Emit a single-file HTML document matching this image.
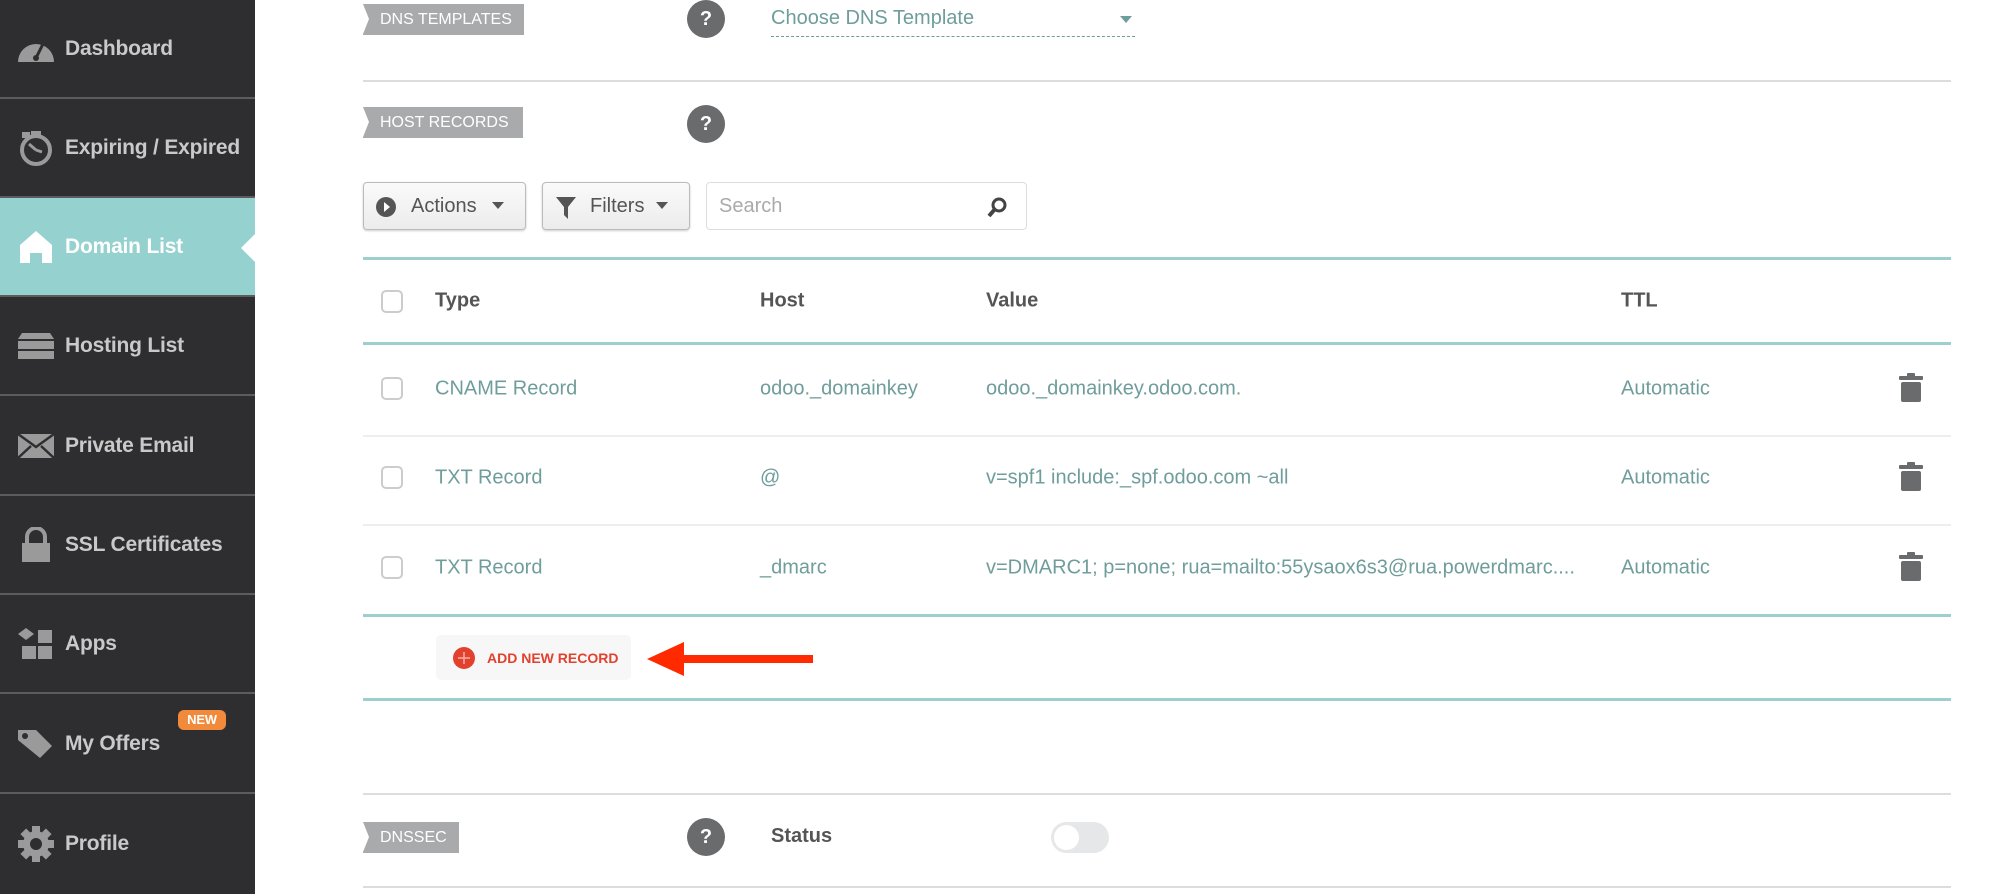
<!DOCTYPE html>
<html><head><meta charset="utf-8"><style>
*{margin:0;padding:0;box-sizing:border-box}
body{width:1999px;height:894px;background:#fff;font-family:"Liberation Sans",sans-serif;position:relative;overflow:hidden}
.sb{position:absolute;left:0;top:0;width:255px;height:894px;background:#2e2e30}
.it{position:absolute;left:0;width:255px;height:99px;border-bottom:2px solid #5c5c5e;color:#c9c9c9;font-weight:bold;font-size:21px;letter-spacing:-0.2px}
.it span{position:absolute;left:65px;top:50%;transform:translateY(-50%)}
.it svg{position:absolute;left:16px;top:50%;transform:translateY(-50%)}
.act{background:#94d1cf;color:#fff}
.a{position:absolute}
.lbl{position:absolute;left:363px;height:31px;background:#a9aaac;color:#fff;font-size:16px;line-height:31px;padding-left:17px}
.lbl:before{content:"";position:absolute;left:0;top:0;border-left:6px solid #fff;border-top:15.5px solid transparent;border-bottom:15.5px solid transparent}
.q{position:absolute;width:38px;height:38px;border-radius:50%;background:#6a6b6d;color:#fff;font-weight:bold;font-size:20px;text-align:center;line-height:38px}
.hl{position:absolute;left:363px;width:1588px}
.btn{position:absolute;top:182px;height:48px;border:1px solid #bbb;border-radius:4px;background:linear-gradient(#fafafa,#ececec);box-shadow:0 1px 2px rgba(0,0,0,.2);color:#555;font-size:20px;line-height:46px}
.cb{position:absolute;left:381px;width:22px;height:23px;border:2px solid #ccc;border-radius:5px}
.t{position:absolute;font-size:20px;color:#6f9d9b;transform:translateY(-50%)}
.th{position:absolute;font-size:20px;color:#555;font-weight:bold;transform:translateY(-50%)}
</style></head><body>
<div class="sb">
<div class="it" style="top:0"><svg width="40" height="30" viewBox="0 0 40 30"><path d="M2 28 A18 18 0 0 1 38 28 Z" fill="#9a9a9a"/><path d="M20 24 L27 10" stroke="#2e2e30" stroke-width="3"/><circle cx="20" cy="24" r="3" fill="#2e2e30"/></svg><span>Dashboard</span></div>
<div class="it" style="top:99px"><svg width="40" height="40" viewBox="0 0 40 40"><circle cx="20" cy="22" r="14" fill="none" stroke="#9a9a9a" stroke-width="4"/><path d="M20 22 L13 16 M20 22 L26 24" stroke="#9a9a9a" stroke-width="3"/><rect x="6" y="4" width="8" height="6" fill="#9a9a9a"/><rect x="15" y="3" width="10" height="4" fill="#9a9a9a"/></svg><span>Expiring / Expired</span></div>
<div class="it act" style="top:198px"><svg width="40" height="36" viewBox="0 0 40 36"><path d="M4 16 L20 2 L36 16 V34 H26 V24 H14 V34 H4 Z" fill="#fff"/></svg><span>Domain List</span><div style="position:absolute;right:0;top:36px;border-right:14px solid #fff;border-top:14px solid transparent;border-bottom:14px solid transparent"></div></div>
<div class="it" style="top:297px"><svg width="40" height="30" viewBox="0 0 40 30"><path d="M6 2 H34 L38 8 H2 Z" fill="#9a9a9a"/><rect x="2" y="10" width="36" height="8" fill="#9a9a9a"/><rect x="2" y="20" width="36" height="8" fill="#9a9a9a"/></svg><span>Hosting List</span></div>
<div class="it" style="top:397px"><svg width="40" height="28" viewBox="0 0 40 28"><rect x="2" y="2" width="36" height="24" fill="#9a9a9a"/><path d="M2 2 L20 15 L38 2 M2 26 L15 14 M38 26 L25 14" stroke="#2e2e30" stroke-width="2.5" fill="none"/></svg><span>Private Email</span></div>
<div class="it" style="top:496px"><svg width="40" height="36" viewBox="0 0 40 36"><path d="M11 16 V10 A9 9 0 0 1 29 10 V16" stroke="#9a9a9a" stroke-width="4" fill="none"/><rect x="6" y="16" width="28" height="19" fill="#9a9a9a"/></svg><span>SSL Certificates</span></div>
<div class="it" style="top:595px"><svg width="40" height="36" viewBox="0 0 40 36"><path d="M10 2 L18 8 L10 14 L2 8 Z" fill="#9a9a9a"/><rect x="22" y="4" width="14" height="13" fill="#9a9a9a"/><rect x="6" y="20" width="14" height="13" fill="#9a9a9a"/><rect x="22" y="20" width="14" height="13" fill="#9a9a9a"/></svg><span>Apps</span></div>
<div class="it" style="top:695px"><svg width="40" height="36" viewBox="0 0 40 36"><path d="M2 4 H20 L36 20 L24 32 L2 14 Z" fill="#9a9a9a"/><circle cx="9" cy="10" r="3" fill="#2e2e30"/></svg><span>My Offers</span><div style="position:absolute;left:178px;top:15px;width:48px;height:20px;border-radius:6px;background:#f28a3b;color:#fff;font-size:13px;line-height:20px;text-align:center">NEW</div></div>
<div class="it" style="top:794px;border:none"><svg width="40" height="40" viewBox="0 0 40 40"><g fill="#9a9a9a"><circle cx="20" cy="20" r="13"/><rect x="16" y="2" width="8" height="36"/><rect x="2" y="16" width="36" height="8"/><rect x="16" y="2" width="8" height="36" transform="rotate(45 20 20)"/><rect x="16" y="2" width="8" height="36" transform="rotate(-45 20 20)"/></g><circle cx="20" cy="20" r="6" fill="#2e2e30"/></svg><span>Profile</span></div>
</div>

<div class="lbl" style="top:4px;width:161px">DNS TEMPLATES</div>
<div class="q" style="left:687px;top:0">?</div>
<div class="a" style="left:771px;top:7px;font-size:20px;color:#6f9d9b">Choose DNS Template</div>
<div class="a" style="left:1120px;top:16px;border-top:7px solid #6f9d9b;border-left:6px solid transparent;border-right:6px solid transparent"></div>
<div class="a" style="left:771px;top:36px;width:364px;border-top:1px dashed #6f9d9b"></div>
<div class="hl" style="top:80px;border-top:2px solid #ddd"></div>

<div class="lbl" style="top:107px;width:160px">HOST RECORDS</div>
<div class="q" style="left:687px;top:105px">?</div>

<div class="btn" style="left:363px;width:163px"><svg style="position:absolute;left:12px;top:14px" width="20" height="20"><circle cx="10" cy="10" r="10" fill="#555"/><path d="M8 5 L14 10 L8 15Z" fill="#fff"/></svg><span style="position:absolute;left:47px">Actions</span><span style="position:absolute;left:128px;top:19px;border-top:7px solid #555;border-left:6px solid transparent;border-right:6px solid transparent"></span></div>
<div class="btn" style="left:542px;width:148px"><svg style="position:absolute;left:13px;top:14px" width="20" height="22"><path d="M0 0 H20 L12 10 V22 L8 18 V10 Z" fill="#555"/></svg><span style="position:absolute;left:47px">Filters</span><span style="position:absolute;left:113px;top:19px;border-top:7px solid #555;border-left:6px solid transparent;border-right:6px solid transparent"></span></div>
<div class="a" style="left:706px;top:182px;width:321px;height:48px;border:1px solid #ddd;border-radius:4px;font-size:20px;color:#aaa;line-height:46px;padding-left:12px">Search<svg style="position:absolute;right:18px;top:13px" width="22" height="22"><circle cx="13" cy="9" r="6" fill="none" stroke="#444" stroke-width="3"/><path d="M9 13 L3 20" stroke="#444" stroke-width="4"/></svg></div>

<div class="hl" style="top:257px;border-top:3px solid #9ccfcd"></div>
<div class="cb" style="top:290px"></div>
<div class="th" style="left:435px;top:301px">Type</div>
<div class="th" style="left:760px;top:301px">Host</div>
<div class="th" style="left:986px;top:301px">Value</div>
<div class="th" style="left:1621px;top:301px">TTL</div>
<div class="hl" style="top:342px;border-top:3px solid #9ccfcd"></div>

<div class="cb" style="top:377px"></div>
<div class="t" style="left:435px;top:389px">CNAME Record</div>
<div class="t" style="left:760px;top:389px">odoo._domainkey</div>
<div class="t" style="left:986px;top:389px">odoo._domainkey.odoo.com.</div>
<div class="t" style="left:1621px;top:389px">Automatic</div>
<div class="hl" style="top:435px;border-top:2px solid #eee"></div>

<div class="cb" style="top:466px"></div>
<div class="t" style="left:435px;top:478px">TXT Record</div>
<div class="t" style="left:760px;top:478px">@</div>
<div class="t" style="left:986px;top:478px">v=spf1 include:_spf.odoo.com ~all</div>
<div class="t" style="left:1621px;top:478px">Automatic</div>
<div class="hl" style="top:524px;border-top:2px solid #eee"></div>

<div class="cb" style="top:556px"></div>
<div class="t" style="left:435px;top:568px">TXT Record</div>
<div class="t" style="left:760px;top:568px">_dmarc</div>
<div class="t" style="left:986px;top:568px">v=DMARC1; p=none; rua=mailto:55ysaox6s3@rua.powerdmarc....</div>
<div class="t" style="left:1621px;top:568px">Automatic</div>

<svg class="a" style="left:1899px;top:373px" width="24" height="215"><g fill="#6a6b6d"><rect x="0" y="3" width="24" height="4" rx="1"/><rect x="8" y="0" width="8" height="4" rx="1"/><rect x="2" y="9" width="20" height="20" rx="2"/><rect x="0" y="92" width="24" height="4" rx="1"/><rect x="8" y="89" width="8" height="4" rx="1"/><rect x="2" y="98" width="20" height="20" rx="2"/><rect x="0" y="182" width="24" height="4" rx="1"/><rect x="8" y="179" width="8" height="4" rx="1"/><rect x="2" y="188" width="20" height="20" rx="2"/></g></svg>

<div class="hl" style="top:614px;border-top:3px solid #9ccfcd"></div>
<div class="a" style="left:436px;top:635px;width:195px;height:45px;background:#f7f7f7;border-radius:5px"></div>
<svg class="a" style="left:452px;top:646px" width="24" height="24"><circle cx="12" cy="12" r="11" fill="#e2412e"/><path d="M12 6 V18 M6 12 H18" stroke="#f9b0a6" stroke-width="1.5"/></svg>
<div class="a" style="left:487px;top:650px;font-size:14px;font-weight:bold;color:#e2412e">ADD NEW RECORD</div>
<svg class="a" style="left:645px;top:640px" width="175" height="38"><path d="M2 19 L39 2 V15 H168 V23 H39 V36 Z" fill="#ff2a00"/></svg>
<div class="hl" style="top:698px;border-top:3px solid #9ccfcd"></div>

<div class="hl" style="top:793px;border-top:2px solid #ddd"></div>
<div class="lbl" style="top:822px;width:96px">DNSSEC</div>
<div class="q" style="left:687px;top:818px">?</div>
<div class="a" style="left:771px;top:825px;font-size:20px;font-weight:bold;color:#555">Status</div>
<div class="a" style="left:1051px;top:822px;width:58px;height:31px;border-radius:16px;background:#e6e7e8"><div style="position:absolute;left:3px;top:3px;width:25px;height:25px;border-radius:50%;background:#fff"></div></div>
<div class="hl" style="top:886px;border-top:2px solid #ddd"></div>
</body></html>
